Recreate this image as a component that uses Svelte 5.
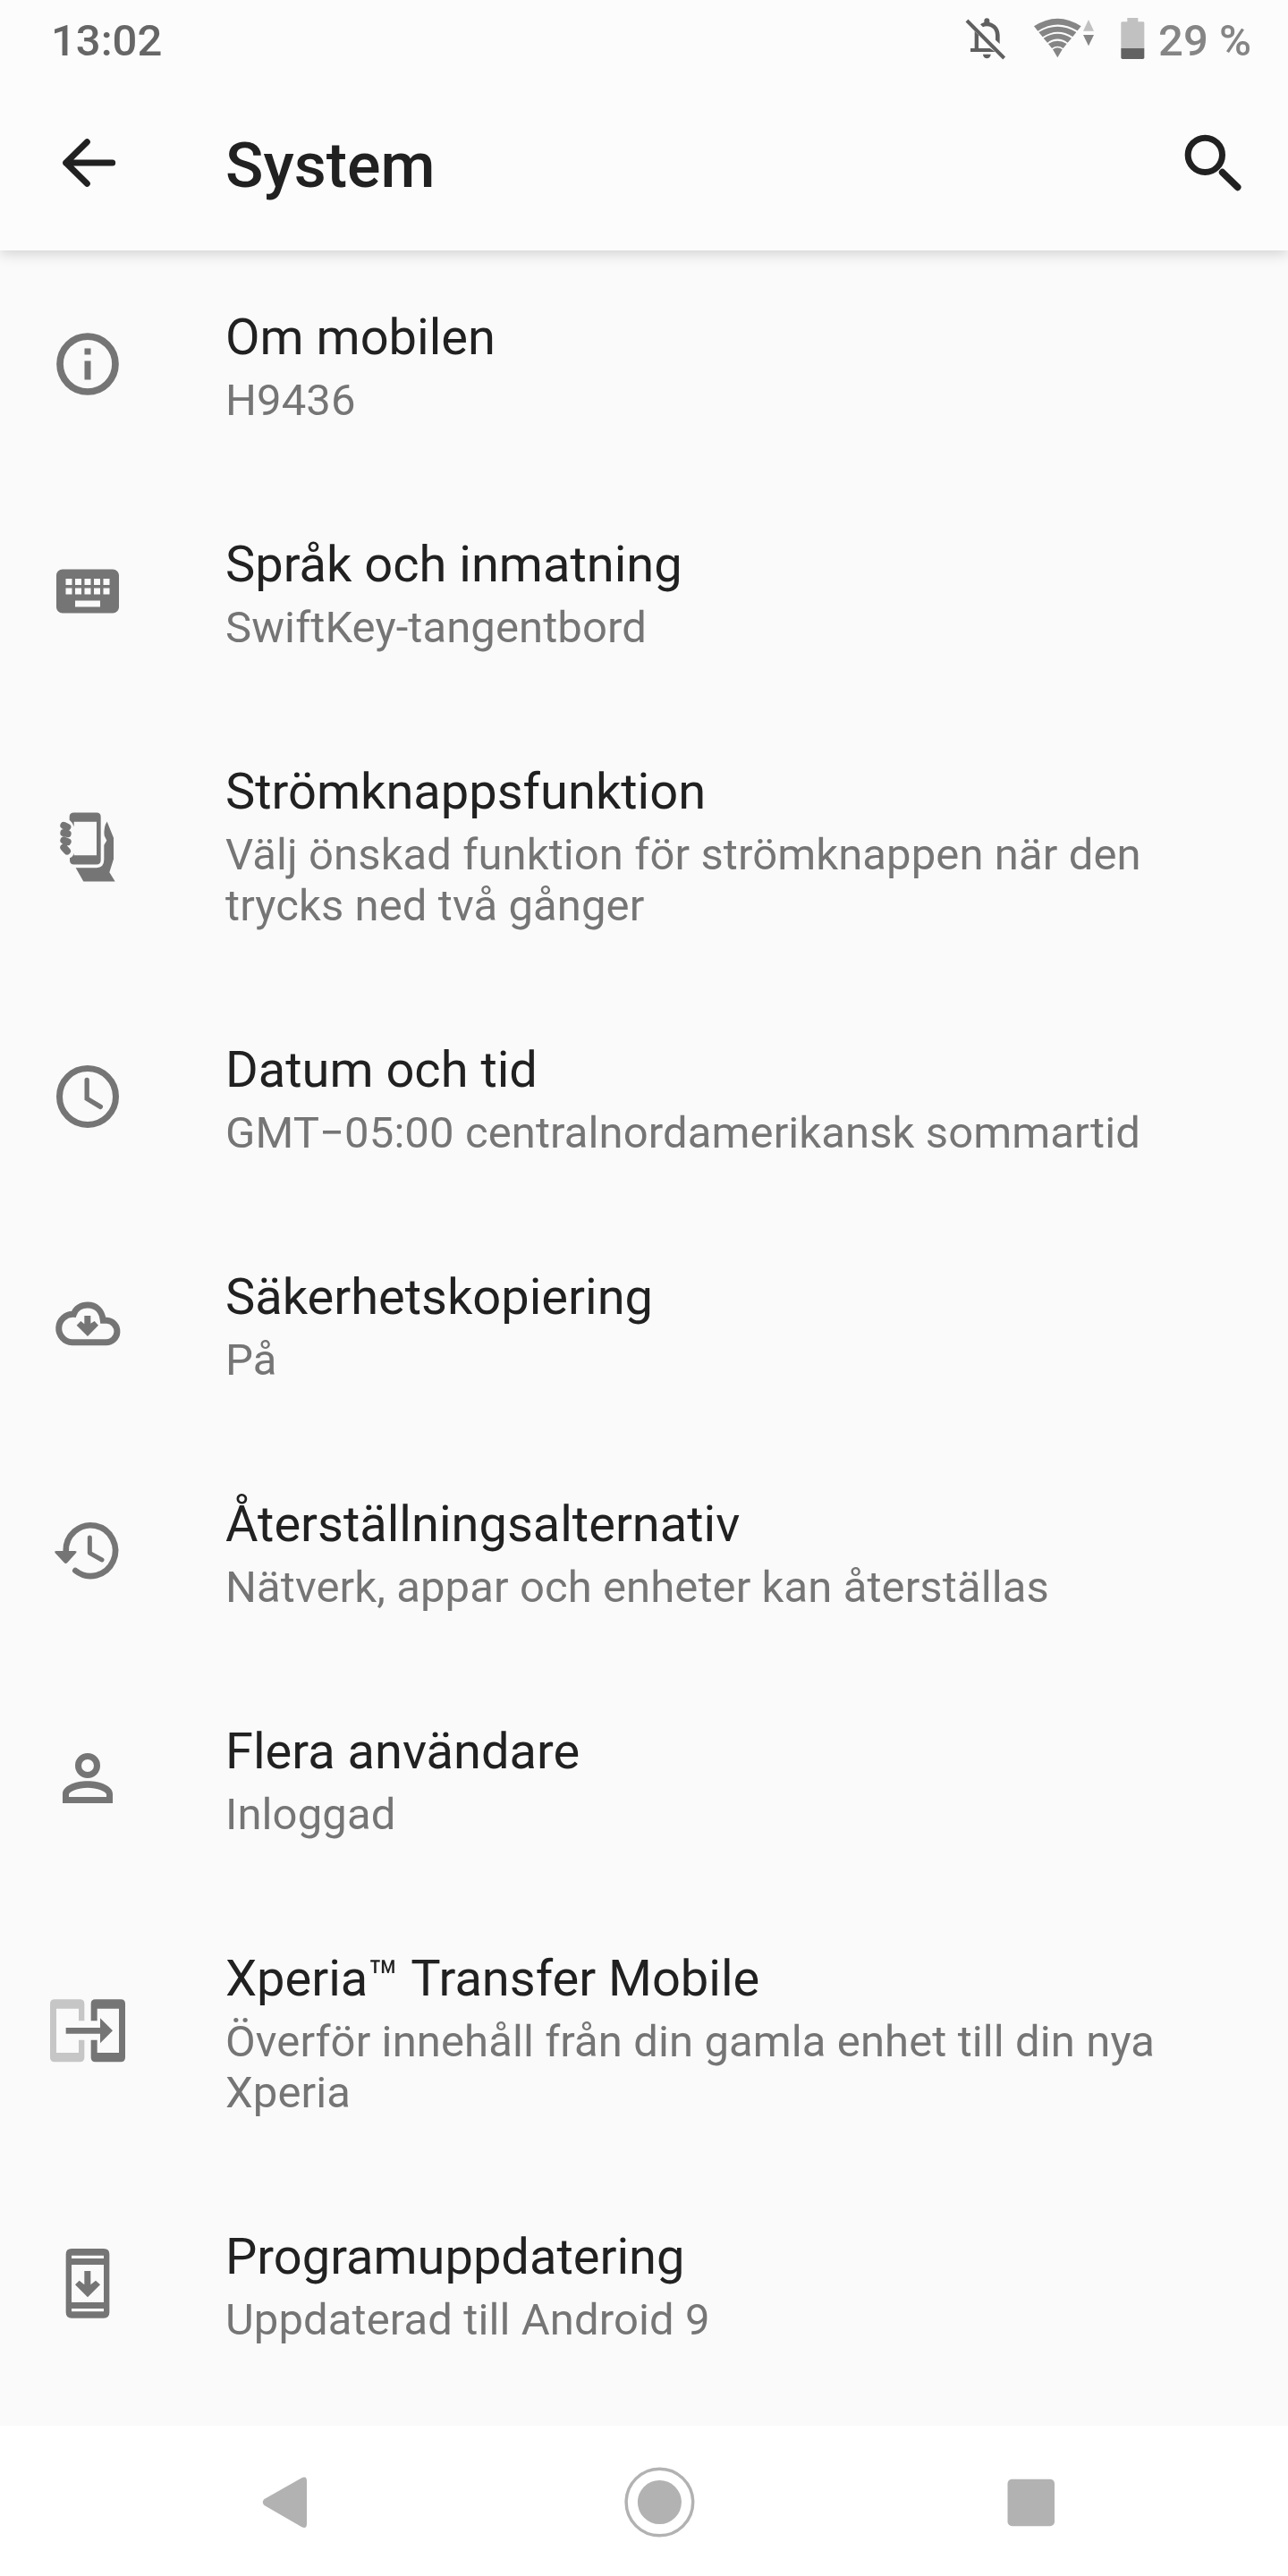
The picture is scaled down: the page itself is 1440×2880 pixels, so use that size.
<script lang="ts">
  type Item = { icon: string; view: string; title: string; summary: string };

  // Each view box is the 84px icon slot at three units per pixel
  const items: Item[] = [
    { icon: 'info', view: '0 0 24 24', title: 'Om mobilen', summary: 'H9436' },
    { icon: 'keyboard', view: '0 0 24 24', title: 'Språk och inmatning', summary: 'SwiftKey-tangentbord' },
    {
      icon: 'power',
      view: '48 64.5 252 252',
      title: 'Strömknappsfunktion',
      summary: 'Välj önskad funktion för strömknappen när den trycks ned två gånger',
    },
    {
      icon: 'clock',
      view: '48 42 252 252',
      title: 'Datum och tid',
      summary: 'GMT−05:00 centralnordamerikansk sommartid',
    },
    { icon: 'backup', view: '48 804 252 252', title: 'Säkerhetskopiering', summary: 'På' },
    {
      icon: 'restore',
      view: '48 36 252 252',
      title: 'Återställningsalternativ',
      summary: 'Nätverk, appar och enheter kan återställas',
    },
    { icon: 'user', view: '48 798 252 252', title: 'Flera användare', summary: 'Inloggad' },
    {
      icon: 'transfer',
      view: '48 56 252 252',
      title: 'Xperia™ Transfer Mobile',
      summary: 'Överför innehåll från din gamla enhet till din nya Xperia',
    },
    { icon: 'update', view: '48 903 252 252', title: 'Programuppdatering', summary: 'Uppdaterad till Android 9' },
  ];
</script>

<div class="screen">
  <header>
    <div class="status-bar">
      <span class="time">13:02</span>
      <div class="status-icons">
        <svg class="bell" viewBox="54 54 144 150">
          <g fill="#606060">
            <path d="M102 118V162H140L158 174H75V162H89V104Z" />
            <path d="M108 82Q113 77 121 75V70A9 9 0 0 1 139 70V75C159 80 173 96 173 118V147L159 134V118C159 101 147 88 130 88Q122 88 117 91Z" />
            <path d="M117 182H143A13 14 0 0 1 117 182Z" />
          </g>
          <path d="M63 69L188 195" stroke="#606060" stroke-width="12" />
        </svg>
        <svg class="wifi" viewBox="285 54 210 150">
          <g fill="#858585">
            <path d="M288 88Q367 36 446 88L434 103Q367 61 301 104Z" />
            <path d="M304 108Q367 71 430 108L418 123Q367 91 317 124Z" />
            <path d="M320 128Q367 99 414 128L401 143Q367 118 333 143Z" />
            <path d="M336 147Q367 128 398 147L386 162Q367 148 348 162Z" />
            <path d="M351 166Q367 153 383 166L367 193Z" />
            <path d="M453 117H489L471 154Z" />
          </g>
          <path d="M453 104L471 66L489 104Z" fill="#c1c1c1" />
        </svg>
        <svg class="battery" viewBox="578 54 81 150">
          <path d="M579 162V77Q579 73 584 73H600V60H636V73H652Q657 73 657 77V162Z" fill="#c1c1c1" />
          <path d="M579 162H657V193Q657 198 652 198H584Q579 198 579 193Z" fill="#626262" />
        </svg>
        <span class="percent">29 %</span>
      </div>
    </div>
    <div class="toolbar">
      <svg class="back" viewBox="0 0 252 252" fill="none" stroke="#212121" stroke-width="21" stroke-linecap="round" stroke-linejoin="round">
        <path d="M124 56L53 126L124 196M53 126H209" />
      </svg>
      <h1>System</h1>
      <svg class="search" viewBox="0 0 252 252" fill="none" stroke="#212121">
        <circle cx="100" cy="100" r="57.5" stroke-width="21" />
        <path d="M158 158L209 208" stroke-width="23" stroke-linecap="round" />
      </svg>
    </div>
  </header>

  <main>
    {#each items as item}
      <div class="item">
        <svg class="icon" viewBox={item.view} fill="#757575">
          {#if item.icon === 'info'}
            <circle cx="12" cy="12" r="8.85" fill="none" stroke="#757575" stroke-width="2.2" />
            <path d="M11 7h2v2h-2zM11 11h2v6h-2z" />
          {:else if item.icon === 'keyboard'}
            <path d="M20 5H4c-1.1 0-2 .9-2 2v10c0 1.1.9 2 2 2h16c1.1 0 2-.9 2-2V7c0-1.1-.9-2-2-2zm-9 3h2v2h-2V8zm0 3h2v2h-2v-2zM8 8h2v2H8V8zm0 3h2v2H8v-2zm-1 2H5v-2h2v2zm0-3H5V8h2v2zm9 7H8v-2h8v2zm0-4h-2v-2h2v2zm0-3h-2V8h2v2zm3 3h-2v-2h2v2zm0-3h-2V8h2v2z" />
          {:else if item.icon === 'power'}
            <path fill-rule="evenodd" d="M128 84H204Q218 84 218 98V244Q218 258 204 258H128Q114 258 114 244V236Q124 234 128 220V227H204V115H128V131Q124 118 113 109V98Q113 84 128 84Z" />
            <path d="M94 127L106 133M94 152L107 155M94 177L107 182M94 201L105 213" stroke="#757575" stroke-width="24" stroke-linecap="round" />
            <path d="M239 114L261 169V240L247 284L266 315H160L134 269H204Q229 269 229 241V193L238 178L230 161Q227 132 239 114Z" />
          {:else if item.icon === 'clock'}
            <circle cx="174" cy="168" r="94.5" fill="none" stroke="#757575" stroke-width="21" />
            <path d="M171.5 112V175L217 202" fill="none" stroke="#757575" stroke-width="16" stroke-linecap="round" />
          {:else if item.icon === 'backup'}
            <path d="M127 898A47 47 0 0 0 122 992.5H234A36 36 0 0 0 238 919H226C222 885 202 867 174 867C152 867 134 878 127 898Z" fill="none" stroke="#757575" stroke-width="21" />
            <path d="M163 903H184V929L197 921L210 935L174 972L137 935L151 921L163 931Z" />
          {:else if item.icon === 'restore'}
            <path d="M101 164A83 85 0 1 1 133 228" fill="none" stroke="#757575" stroke-width="20" stroke-linecap="round" />
            <path d="M69 162H131Q140 162 135 169L106 201Q100 207 95 201L65 169Q61 162 69 162Z" />
            <path d="M181 117V169L222 192" fill="none" stroke="#757575" stroke-width="15" stroke-linecap="round" stroke-linejoin="round" />
          {:else if item.icon === 'user'}
            <circle cx="174" cy="882" r="31.5" fill="none" stroke="#757575" stroke-width="21" />
            <path fill-rule="evenodd" d="M90 1008V977C90 951 130 934 174 934S258 951 258 977V1008ZM111 987H237V979C237 968 205 956 174 956S111 968 111 979Z" />
          {:else if item.icon === 'transfer'}
            <path fill="#c6c6c6" d="M64 75H148Q163 75 163 90V147H144V106H69V254H144V211H163V270Q163 285 148 285H64Q48 285 48 270V90Q48 75 64 75Z" />
            <path d="M200 75H285Q300 75 300 90V270Q300 285 285 285H200Q185 285 185 270V211H206V254H279V106H206V147H185V90Q185 75 200 75Z" />
            <path d="M101 170H216V138L258 180L216 222V190H101Z" />
          {:else}
            <path fill-rule="evenodd" d="M120 912H228Q247 912 247 931V1126Q247 1145 228 1145H120Q101 1145 101 1126V931Q101 912 120 912ZM120 935V945H228V935ZM120 966V1092H228V966ZM120 1113V1123H228V1113Z" />
            <path d="M163 987H184V1033L201 1019L216 1033L174 1075L132 1033L146 1019L163 1033Z" />
          {/if}
        </svg>
        <div class="text">
          <div class="title">{item.title}</div>
          <div class="summary">{item.summary}</div>
        </div>
      </div>
    {/each}
  </main>

  <nav>
    <button aria-label="Bakåt">
      <svg viewBox="0 0 84 84" fill="#b2b2b2">
        <path d="M16.500 40L58 16.500Q64 13.500 64 20V67.500Q64 74 58 71L16.500 47Q13 43.500 16.500 40Z" />
      </svg>
    </button>
    <button aria-label="Hem">
      <svg viewBox="0 0 84 84" fill="#b2b2b2">
        <circle cx="42.4" cy="43.5" r="37.3" fill="none" stroke="#b2b2b2" stroke-width="3.5" />
        <circle cx="42.4" cy="43.5" r="24.5" />
      </svg>
    </button>
    <button aria-label="Översikt">
      <svg viewBox="0 0 84 84" fill="#b2b2b2">
        <rect x="15.5" y="17.7" width="52.5" height="52.5" rx="5" />
      </svg>
    </button>
  </nav>
</div>

<style>
  :global(body) {
    margin: 0;
    background: #fafafa;
  }

  .screen {
    display: flex;
    flex-direction: column;
    width: 1440px;
    height: 2880px;
    overflow: hidden;
    background: #fafafa;
    color: #212121;
    font-family: Roboto, sans-serif;
  }

  svg {
    display: block;
    flex-shrink: 0;
  }

  header {
    position: relative;
    flex-shrink: 0;
    height: 280px;
    background: #fcfcfc;
    box-shadow: 0 4px 14px rgba(0, 0, 0, 0.16);
  }

  .status-bar {
    display: flex;
    justify-content: space-between;
    height: 84px;
    padding: 0 41px 0 57px;
    box-sizing: border-box;
    font-size: 49px;
    font-weight: 500;
    line-height: 57px;
  }

  .time {
    padding-top: 17px;
    color: #666666;
  }

  .status-icons {
    display: flex;
    align-items: flex-start;
  }

  .status-icons svg {
    height: 50px;
    margin-top: 18px;
  }

  .bell {
    width: 48px;
    margin-right: 29px;
  }

  .wifi {
    width: 70px;
    margin-right: 28px;
  }

  .battery {
    width: 27px;
    margin-right: 15px;
  }

  .percent {
    padding-top: 17px;
    color: #858585;
  }

  .toolbar {
    display: flex;
    align-items: center;
    height: 196px;
    padding: 0 42px 0 56px;
    box-sizing: border-box;
  }

  .back,
  .search {
    width: 84px;
    height: 84px;
  }

  h1 {
    flex: 1;
    margin: 6px 0 0 112px;
    font-size: 70px;
    font-weight: 500;
    line-height: 82px;
  }

  main {
    flex: 1;
  }

  .item {
    display: flex;
    align-items: center;
    padding: 0 100px 0 56px;
  }

  .icon {
    width: 84px;
    height: 84px;
  }

  .text {
    flex: 1;
    margin-left: 112px;
    padding: 64px 0 58px;
  }

  .title {
    margin-bottom: 9px;
    font-size: 56px;
    line-height: 66px;
  }

  .summary {
    color: #757575;
    font-size: 49px;
    letter-spacing: 0.1px;
    line-height: 57px;
  }

  nav {
    display: flex;
    flex-shrink: 0;
    height: 168px;
    padding-left: 113px;
    background: #ffffff;
  }

  button {
    display: flex;
    align-items: center;
    justify-content: center;
    width: 416px;
    padding: 0;
    border: none;
    background: none;
  }

  button svg {
    width: 84px;
    height: 84px;
  }
</style>
